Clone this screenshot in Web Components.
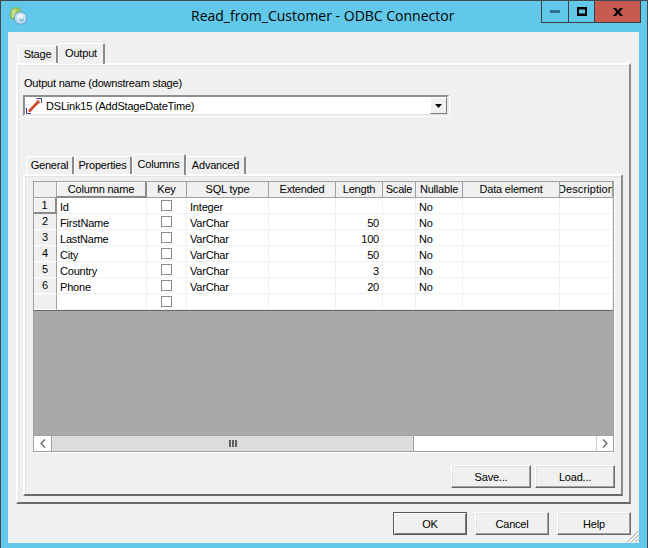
<!DOCTYPE html>
<html>
<head>
<meta charset="utf-8">
<title>Read_from_Customer - ODBC Connector</title>
<style>
  html, body { margin: 0; padding: 0; background: #62c8ea; }
  body { font: 11px "Liberation Sans", Arial, sans-serif; letter-spacing: -0.2px; color: #000; overflow: hidden; }
  .output-label { display: block; margin: 0 0 5px 1px; height: 14px; line-height: 14px; }
  .form-buttons { display: flex; justify-content: flex-end; gap: 4px; margin: 13px 6px 0 0; }
  .dialog-buttons { display: flex; gap: 8px; }
</style>
</head>
<body>

<ds-window heading="Read_from_Customer - ODBC Connector">
  <ds-tabs tabs="Stage,Output" selected="1" widths="40,47" style="--panel-w:615px;--panel-h:441px;--pad:11px 0 0 5px;--strip-left:2px">
    <span class="output-label">Output name (downstream stage)</span>
    <ds-combo value="DSLink15 (AddStageDateTime)"></ds-combo>
    <ds-tabs tabs="General,Properties,Columns,Advanced" selected="2" widths="48,58,54,60" style="--panel-w:600px;--panel-h:322px;--pad:5px 0 0 8px;--strip-left:3px;margin-top:38px">
      <ds-grid></ds-grid>
      <div class="form-buttons">
        <ds-button style="width:80px">Save...</ds-button>
        <ds-button style="width:80px">Load...</ds-button>
      </div>
    </ds-tabs>
  </ds-tabs>
  <div slot="footer" class="dialog-buttons">
    <ds-button default style="width:74px">OK</ds-button>
    <ds-button style="width:74px">Cancel</ds-button>
    <ds-button style="width:74px">Help</ds-button>
  </div>
</ds-window>

<script>
(function() {
  'use strict';

  class DsWindow extends HTMLElement {
    constructor() {
      super();
      this.attachShadow({ mode: 'open' });
      this.shadowRoot.innerHTML = `
        <style>
          :host {
            display: block; width: 648px; height: 548px; box-sizing: border-box;
            border: 1px solid #3c4a52; border-bottom: 0; background: #62c8ea;
          }
          .titlebar { display: flex; height: 31px; position: relative; }
          .icon { margin: 6px 0 0 7px; width: 20px; height: 20px; flex: none; }
          .heading {
            position: absolute; left: 190px; top: 5px; line-height: 20px; white-space: nowrap; letter-spacing: 0;
            font: 14px "Open Sans", sans-serif; color: #000;
          }
          .controls { display: flex; margin-left: auto; margin-right: 6px; height: 22px; border: 1px solid #3c4045; border-top: 0; box-sizing: border-box; }
          .controls div { display: flex; align-items: center; justify-content: center; box-sizing: border-box; }
          .min { width: 27px; border-right: 1px solid #3c4045; }
          .max { width: 26px; border-right: 1px solid #3c4045; }
          .close { width: 45px; background: #c55a50; }
          .client { width: 631px; height: 511px; margin-left: 7px; background: #f0f0f0; box-sizing: border-box; padding: 11px 0 0 8px; position: relative; }
          .footer { position: absolute; right: 8px; bottom: 8px; }
          .grip { position: absolute; right: 0; bottom: 0; }
        </style>
        <div class="titlebar">
          <svg class="icon" viewBox="0 0 20 20">
            <path d="M3 2.5 L8 0.5 L12 2 L13 7 L9 12 L4 12 L2 9 Z" fill="#a3c95c" stroke="#7fa63c" stroke-width=".6"/>
            <path d="M4 3 L8 2 L7 10 L4 10 Z" fill="#c8e08e"/>
            <circle cx="12.5" cy="11" r="6.2" fill="#bfe0f2" stroke="#5f9fc4" stroke-width="1"/>
            <path d="M9 9.5 Q12 6 15.5 8 L14 11 L11 10 L10 13 Z" fill="#f2fafe"/>
            <path d="M11 13.5 Q14 16 16.5 12.5 L15 12 Z" fill="#7fb9dc"/>
          </svg>
          <span class="heading"></span>
          <div class="controls">
            <div class="min"><svg width="10" height="3"><rect width="10" height="3" fill="#2f6f8a"/></svg></div>
            <div class="max"><svg width="10" height="9"><path d="M0 0H10V9H0Z M2 2.5V6.5H8V2.5Z" fill="#000" fill-rule="evenodd"/></svg></div>
            <div class="close"><svg width="10" height="8" viewBox="0 0 10 8"><path d="M0 0H3L5 2.4L7 0H10L6.6 4L10 8H7L5 5.6L3 8H0L3.4 4Z" fill="#000"/></svg></div>
          </div>
        </div>
        <div class="client">
          <slot></slot>
          <div class="footer"><slot name="footer"></slot></div>
          <svg class="grip" width="13" height="13" viewBox="0 0 13 13" stroke-width="1">
            <path d="M12.5 1 L1 12.5 M12.5 5 L5 12.5 M12.5 9 L9 12.5" stroke="#a0a0a0" fill="none"/>
            <path d="M12.5 2.5 L2.5 12.5 M12.5 6.5 L6.5 12.5 M12.5 10.5 L10.5 12.5" stroke="#fff" fill="none"/>
          </svg>
        </div>`;
      this.shadowRoot.querySelector('.heading').textContent = this.getAttribute('heading');
    }
  }

  class DsTabs extends HTMLElement {
    constructor() {
      super();
      this.attachShadow({ mode: 'open' });
      this.shadowRoot.innerHTML = `
        <style>
          :host { display: block; }
          .strip { display: flex; align-items: flex-end; height: 20px; padding-left: var(--strip-left, 2px); position: relative; z-index: 1; }
          .tab {
            box-sizing: border-box; height: 18px; line-height: 17px; text-align: center; margin-bottom: 0;
            border-top: 1px solid #fff; border-left: 1px solid #fff; border-right: 2px solid #8a8a8a;
            border-top-left-radius: 2px; border-top-right-radius: 2px; white-space: nowrap;
          }
          .tab.on { height: 21px; line-height: 18px; margin-bottom: -1px; background: #f0f0f0; }
          .panel {
            box-sizing: border-box; width: var(--panel-w); height: var(--panel-h); padding: var(--pad);
            border-top: 2px solid #fff; border-left: 2px solid #fff;
            border-right: 2px solid #8a8a8a; border-bottom: 2px solid #6a6a6a;
            box-shadow: inset 1px 1px 0 #e3e3e3;
          }
        </style>
        <div class="strip"></div>
        <div class="panel"><slot></slot></div>`;
      const strip = this.shadowRoot.querySelector('.strip');
      const widths = this.getAttribute('widths').split(',');
      this.getAttribute('tabs').split(',').forEach((name, i) => {
        const tab = document.createElement('div');
        tab.className = 'tab' + (i === Number(this.getAttribute('selected')) ? ' on' : '');
        tab.style.width = widths[i] + 'px';
        tab.textContent = name;
        strip.appendChild(tab);
      });
    }
  }

  class DsCombo extends HTMLElement {
    constructor() {
      super();
      this.attachShadow({ mode: 'open' });
      this.shadowRoot.innerHTML = `
        <style>
          :host {
            display: flex; width: 426px; height: 21px; box-sizing: border-box; align-items: center;
            background: #fff; border: 2px solid; border-color: #8f8f8f #e8e8e8 #e8e8e8 #8f8f8f;
            box-shadow: 1px 1px 0 #fff;
          }
          svg { margin: 0 3px 0 1px; flex: none; }
          .value { flex: 1; white-space: nowrap; }
          .arrow {
            width: 17px; height: 17px; box-sizing: border-box; background: #f0f0f0; display: flex; align-items: center; justify-content: center;
            border: 1px solid; border-color: #fff #7a7a7a #7a7a7a #fff;
          }
        </style>
        <svg width="17" height="16" viewBox="0 0 17 16" fill="none">
          <path d="M10.5 .5 H15.5 V5" stroke="#3a3a9a"/>
          <path d="M.5 10 V15.5 H5" stroke="#3a3a9a"/>
          <path d="M3 13.5 L12 4" stroke="#d0462a" stroke-width="2.6"/>
          <path d="M10 2.5 L13.5 2.5 L13.5 6 Z" fill="#c23f28"/>
        </svg>
        <span class="value"></span>
        <div class="arrow"><svg width="7" height="4" style="margin:0"><path d="M0 0H7L3.5 4Z" fill="#000"/></svg></div>`;
      this.shadowRoot.querySelector('.value').textContent = this.getAttribute('value');
    }
  }

  const COLUMNS = [
    ['Column name', 90], ['Key', 40], ['SQL type', 82], ['Extended', 67], ['Length', 47],
    ['Scale', 33], ['Nullable', 47], ['Data element', 97], ['Description', 53]
  ];
  const ROWS = [
    ['Id', 'Integer', '', 'No'],
    ['FirstName', 'VarChar', '50', 'No'],
    ['LastName', 'VarChar', '100', 'No'],
    ['City', 'VarChar', '50', 'No'],
    ['Country', 'VarChar', '3', 'No'],
    ['Phone', 'VarChar', '20', 'No'],
    ['', '', '', '']
  ];

  class DsGrid extends HTMLElement {
    constructor() {
      super();
      this.attachShadow({ mode: 'open' });
      const tracks = '23px ' + COLUMNS.map(c => c[1] + 'px').join(' ');
      let cells = '<div class="hd corner"></div>';
      COLUMNS.forEach((c, i) => {
        // the last header is wider than its column and gets clipped, as in the real grid
        const extra = i === 0 ? ' raised' : (i === COLUMNS.length - 1 ? ' tight' : '');
        cells += `<div class="hd${extra}"><span>${c[0]}</span></div>`;
      });
      ROWS.forEach((r, n) => {
        cells += `<div class="rh${n === 0 ? ' raised' : ''}">${n < 6 ? n + 1 : ''}</div>`;
        cells += `<div class="c">${r[0]}</div>`;
        cells += '<div class="c key"><i></i></div>';
        cells += `<div class="c">${r[1]}</div><div class="c"></div>`;
        cells += `<div class="c num">${r[2]}</div><div class="c"></div>`;
        cells += `<div class="c">${r[3]}</div><div class="c"></div><div class="c"></div>`;
      });
      this.shadowRoot.innerHTML = `
        <style>
          :host {
            display: block; width: 581px; height: 271px; box-sizing: border-box; background: #a9a9a9;
            border: 1px solid #a0a0a0; box-shadow: 1px 1px 0 #fff; line-height: 15px;
          }
          .table { display: grid; grid-template-columns: ${tracks}; grid-auto-rows: 16px; background: #fff; height: 128px; border-bottom: 1px solid #696969; overflow: hidden; }
          .hd, .rh {
            background: #f0f0f0; box-sizing: border-box; display: flex; justify-content: center; align-items: center; overflow: hidden; white-space: nowrap;
            border-right: 1px solid #a0a0a0; border-bottom: 1px solid #a0a0a0;
          }
          .rh { border-bottom-color: #fff; border-right-color: #a0a0a0; }
          .hd span { flex: none; }
          .tight { letter-spacing: 0.1px; }
          .raised { border-right: 2px solid #8a8a8a; border-bottom: 2px solid #8a8a8a; box-shadow: inset 1px 1px 0 #fff; }
          .corner { border-color: #a0a0a0; }
          .c { box-sizing: border-box; border-right: 1px solid #f0f0f0; border-bottom: 1px solid #f0f0f0; padding: 3px 0 0 3px; white-space: nowrap; overflow: hidden; line-height: 12px; }
          .num { text-align: right; padding: 3px 3px 0 0; }
          .key { display: flex; justify-content: center; align-items: center; padding: 0; }
          .key i { display: block; width: 11px; height: 11px; box-sizing: border-box; border: 1px solid #8a8a8a; background: #fff; }
          .spacer { height: 124px; }
          .scroll { display: flex; height: 16px; background: #fff; border-top: 1px solid #a0a0a0; box-sizing: border-box; }
          .sb { width: 18px; display: flex; align-items: center; justify-content: center; background: #fff; flex: none; box-sizing: border-box; }
          .sb.l { border-right: 1px solid #a0a0a0; }
          .sb.r { margin-left: auto; border-left: 1px solid #d0d0d0; width: 17px; }
          .thumb { width: 362px; background: #dcdcdc; border-right: 1px solid #a0a0a0; display: flex; align-items: center; justify-content: center; box-sizing: border-box; }
        </style>
        <div class="table">${cells}</div>
        <div class="spacer"></div>
        <div class="scroll">
          <div class="sb l"><svg width="6" height="9"><path d="M5 .5L1 4.5L5 8.5" fill="none" stroke="#606060" stroke-width="1.2"/></svg></div>
          <div class="thumb"><svg width="8" height="7"><path d="M0 0H2V7H0ZM3 0H5V7H3ZM6 0H8V7H6Z" fill="#606060"/></svg></div>
          <div class="sb r"><svg width="6" height="9"><path d="M1 .5L5 4.5L1 8.5" fill="none" stroke="#606060" stroke-width="1.2"/></svg></div>
        </div>`;
    }
  }

  class DsButton extends HTMLElement {
    constructor() {
      super();
      this.attachShadow({ mode: 'open' });
      this.shadowRoot.innerHTML = `
        <style>
          :host {
            display: flex; align-items: center; justify-content: center; height: 23px; box-sizing: border-box;
            background: #f0f0f0; border: 1px solid; border-color: #fff #696969 #696969 #fff;
            box-shadow: inset -1px -1px 0 #a0a0a0, inset 1px 1px 0 #e3e3e3;
          }
          :host([default]) { border: 1px solid #5a5a5a; box-shadow: inset 1px 1px 0 #fff, inset -1px -1px 0 #7a7a7a; }
        </style>
        <slot></slot>`;
    }
  }

  customElements.define('ds-window', DsWindow);
  customElements.define('ds-tabs', DsTabs);
  customElements.define('ds-combo', DsCombo);
  customElements.define('ds-grid', DsGrid);
  customElements.define('ds-button', DsButton);
})();
</script>
</body>
</html>
